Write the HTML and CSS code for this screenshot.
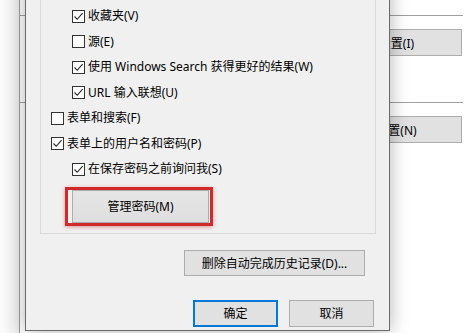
FILE: index.html
```
<!DOCTYPE html>
<html lang="zh-CN">

<head>
    <meta charset="UTF-8">
    <title>自动完成设置</title>
    <link rel="stylesheet" href="styles.css">
</head>

<body>
    <div class="screen">
        <div class="back-window">
            <div class="back-rule"></div>
            <button class="btn back-btn">设置(I)</button>
            <div class="back-rule lower"></div>
            <button class="btn back-btn">设置(N)</button>
        </div>

        <div class="dialog">
            <div class="group">
                <div class="opt sub"><span class="box on"></span>收藏夹(V)</div>
                <div class="opt sub"><span class="box"></span>源(E)</div>
                <div class="opt sub"><span class="box on"></span>使用 Windows Search 获得更好的结果(W)</div>
                <div class="opt sub"><span class="box on"></span>URL 输入联想(U)</div>
                <div class="opt"><span class="box"></span>表单和搜索(F)</div>
                <div class="opt"><span class="box on"></span>表单上的用户名和密码(P)</div>
                <div class="opt sub"><span class="box on"></span>在保存密码之前询问我(S)</div>
                <div class="highlight">
                    <button class="btn manage">管理密码(M)</button>
                </div>
            </div>

            <div class="row-end">
                <button class="btn wide">删除自动完成历史记录(D)...</button>
            </div>
            <div class="row-end actions">
                <button class="btn small primary">确定</button>
                <button class="btn small">取消</button>
            </div>
        </div>
    </div>

    <script>
        // draw the tick inside every checked box
        const tick = '<svg width="11" height="11" viewBox="0 0 11 11"><path d="M1.5 5.5 L4.2 8.3 L9.6 2.2" fill="none" stroke="#222" stroke-width="1.1"/></svg>'
        document.querySelectorAll('.box.on').forEach(box => {
            box.innerHTML = tick
        })
    </script>
</body>

</html>
```

FILE: styles.css
```
* {
    box-sizing: border-box;
}

body {
    margin: 0;
    font-family: "Noto Sans", "Noto Sans CJK SC", sans-serif;
    font-size: 12px;
    color: #000;
}

.screen {
    position: relative;
    width: 474px;
    height: 333px;
    overflow: hidden;
    background: linear-gradient(to right, #fcfcfc 0, #ececec 19px);
}

.back-window {
    position: absolute;
    left: 19px;
    top: 0;
    right: 0;
    bottom: 0;
    display: flex;
    flex-direction: column;
    padding: 15px 11px 0 0;
    background-color: #fff;
    border-left: 1px solid #9c9c9c;
}

.back-rule {
    height: 1px;
    background-color: #a0a0a0;
}

.back-rule.lower {
    margin-top: 46px;
}

.btn {
    display: flex;
    justify-content: center;
    align-items: center;
    padding: 0;
    font-family: inherit;
    font-size: 12px;
    color: #000;
    background-color: #e1e1e1;
    border: 1px solid #adadad;
}

.back-btn {
    align-self: flex-end;
    width: 131px;
    height: 27px;
    margin: 13px 1px 0 0;
}

.dialog {
    position: absolute;
    left: 25px;
    top: -41px;
    width: 365px;
    height: 372px;
    padding: 10px 0 10px 0;
    display: flex;
    flex-direction: column;
    background-color: #f0f0f0;
    border: 1px solid #6a6a6a;
    box-shadow: 0 0 18px rgba(0, 0, 0, .3);
}

.group {
    display: flex;
    flex-direction: column;
    align-items: flex-start;
    row-gap: 9.5px;
    margin: 0 13px 0 14px;
    padding: 37px 10px 7px 10px;
    border: 1px solid #dcdcdc;
}

.opt {
    display: flex;
    align-items: center;
    height: 16px;
    line-height: 16px;
    white-space: nowrap;
}

.opt.sub {
    margin-left: 21px;
}

.box {
    display: flex;
    justify-content: center;
    align-items: center;
    width: 13px;
    height: 13px;
    margin-right: 3px;
    background-color: #fff;
    border: 1px solid #333;
}

.highlight {
    margin: 0 0 0 14px;
    padding: 0 1px 0 4px;
    border: 3px solid #d02a2a;
    box-shadow: 0 1px 4px rgba(190, 40, 40, .45);
}

.manage {
    width: 137px;
    height: 33px;
    background: linear-gradient(#e6e6e6, #dedede);
}

.row-end {
    display: flex;
    justify-content: flex-end;
    margin-top: 16px;
    padding-right: 24px;
}

.wide {
    width: 181px;
    height: 26px;
}

.row-end.actions {
    column-gap: 11px;
    margin-top: 24px;
    padding-right: 15px;
}

.small {
    width: 85px;
    height: 27px;
}

.primary {
    border: 2px solid #0078d7;
}
```
